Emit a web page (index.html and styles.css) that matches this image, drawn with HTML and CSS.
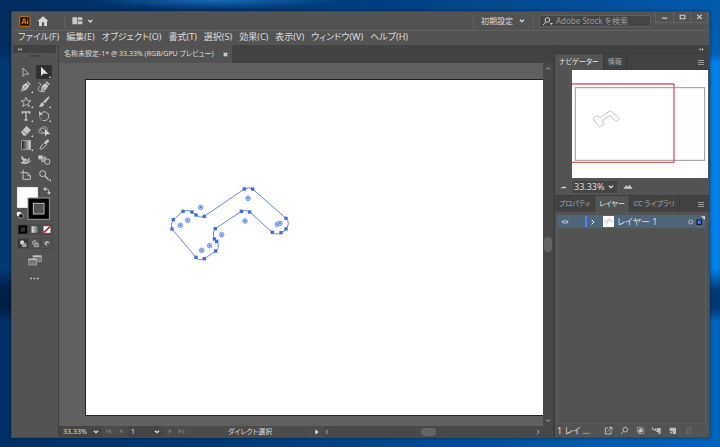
FILE: index.html
```html
<!DOCTYPE html>
<html lang="ja">
<head>
    <meta charset="UTF-8">
    <meta name="viewport" content="width=device-width, initial-scale=1.0">
    <title>名称未設定-1</title>
    <link rel="stylesheet" href="styles.css">
</head>
<body>
    <div class="window">
        <header class="titlebar">
            <svg class="logo" viewBox="0 0 36 33" role="img" aria-label="Ai">
                <rect x="2" y="2" width="31" height="29" rx="2" fill="#2b1200" stroke="#c9731c" stroke-width="3"/>
                <path d="M9 24L14 9h3l4 15M11 19h8M26 13v11M26 8v2" fill="none" stroke="#f08a24" stroke-width="3"/>
            </svg>
            <button class="icon-button home" aria-label="ホーム">
                <svg width="12" height="10" viewBox="0 0 36 30"><path d="M18 1L35 16h-5v14h-9V19h-6v11H6V16H1z" fill="#d4d4d4"/></svg>
            </button>
            <span class="divider"></span>
            <button class="icon-button arrange" aria-label="ドキュメントレイアウト">
                <svg width="22" height="8" viewBox="0 0 66 24"><path d="M1 1h15v21H1zM18 1h13v9H18zM18 13h13v9H18z" fill="#c8c8c8"/><path d="M49 9l6 6 6-6" fill="none" stroke="#ddd" stroke-width="4"/></svg>
            </button>
            <span class="spacer"></span>
            <span class="divider"></span>
            <button class="workspace">初期設定
                <svg width="6" height="4" viewBox="0 0 18 12"><path d="M3 2l6 6 6-6" fill="none" stroke="#ddd" stroke-width="4"/></svg>
            </button>
            <span class="divider"></span>
            <label class="search">
                <svg width="12" height="9" viewBox="0 0 36 27"><circle cx="16" cy="9" r="7" fill="none" stroke="#ccc" stroke-width="3"/><path d="M11 15L3 24" stroke="#ccc" stroke-width="3"/><path d="M23 18h10l-5 6z" fill="#ccc"/></svg>
                <input type="text" placeholder="Adobe Stock を検索" aria-label="Adobe Stock を検索">
            </label>
            <div class="window-buttons">
                <button aria-label="最小化"><svg viewBox="0 0 24 20"><path d="M3 14h18" stroke="#ccc" stroke-width="4"/></svg></button>
                <button aria-label="最大化"><svg viewBox="0 0 24 20"><path d="M4 4h16v12H4z" fill="none" stroke="#ccc" stroke-width="4"/></svg></button>
                <button aria-label="閉じる"><svg viewBox="0 0 24 20"><path d="M4 2l16 15M20 2L4 17" stroke="#ccc" stroke-width="4"/></svg></button>
            </div>
        </header>

        <nav class="menubar">
            <button>ファイル(F)</button>
            <button>編集(E)</button>
            <button>オブジェクト(O)</button>
            <button>書式(T)</button>
            <button>選択(S)</button>
            <button>効果(C)</button>
            <button>表示(V)</button>
            <button>ウィンドウ(W)</button>
            <button>ヘルプ(H)</button>
        </nav>

        <div class="workarea">
            <aside class="toolbox">
                <div class="dock-head">
                    <svg width="5" height="5" viewBox="0 0 15 15"><path d="M7 3L2 7l5 5zM14 3L9 7l5 5z" fill="#ccc"/></svg>
                </div>
                <div class="grip"></div>
                <div class="tools">
                    <button aria-label="選択"><svg viewBox="0 0 48 42"><path d="M15 9v25l7-7h11z" fill="none" stroke="#c6c6c6" stroke-width="2.5"/></svg></button>
                    <button class="active" aria-label="ダイレクト選択"><svg viewBox="0 0 48 42"><path d="M15 5v28l7-7h14z" fill="#e2e2e2"/><path d="M44 33v6h-6z" fill="#ddd"/></svg></button>
                    <button aria-label="ペン"><svg viewBox="0 0 48 42"><path d="M9 35l5-19 11-8 9 10-9 11z" fill="#c6c6c6"/><path d="M28 5l9 10" stroke="#c6c6c6" stroke-width="4"/><path d="M11 33l10-11" stroke="#535353" stroke-width="2"/><circle cx="22" cy="20" r="2" fill="#535353"/><path d="M45 33v6h-6z" fill="#ddd"/></svg></button>
                    <button aria-label="曲線"><svg viewBox="0 0 48 42"><path d="M14 35l4-18 11-8 8 9-8 11z" fill="#c6c6c6"/><path d="M31 5l9 9" stroke="#c6c6c6" stroke-width="4"/><path d="M17 32l9-10" stroke="#535353" stroke-width="2"/><path d="M8 9c9 0 6 7 2 11-5 5-5 12 4 15h13" fill="none" stroke="#c6c6c6" stroke-width="2.5"/></svg></button>
                    <button aria-label="スター"><svg viewBox="0 0 48 42"><path d="M24 7l4 10h11l-9 7 4 11-10-7-10 7 4-11-9-7h11z" fill="none" stroke="#c6c6c6" stroke-width="2.5"/><path d="M45 33v6h-6z" fill="#ddd"/></svg></button>
                    <button aria-label="ブラシ"><svg viewBox="0 0 48 42"><path d="M38 4c3 2 2 4 1 6L27 25l-6-5zM19 22l6 5c-2 7-9 10-17 8 6-3 4-11 11-13z" fill="#c6c6c6"/><path d="M45 33v6h-6z" fill="#ddd"/></svg></button>
                    <button aria-label="文字"><svg viewBox="0 0 48 42"><path d="M13 15V9h22v6M24 9v23M19 33h10" fill="none" stroke="#c6c6c6" stroke-width="4"/><path d="M45 33v6h-6z" fill="#ddd"/></svg></button>
                    <button aria-label="回転"><svg viewBox="0 0 48 42"><path d="M15 13c12-10 24-2 23 10-1 8-7 12-14 12" fill="none" stroke="#c6c6c6" stroke-width="3"/><path d="M24 35C15 35 10 28 11 20" fill="none" stroke="#c6c6c6" stroke-width="3" stroke-dasharray="3 3"/><path d="M9 6v12h12z" fill="#c6c6c6"/><path d="M45 33v6h-6z" fill="#ddd"/></svg></button>
                    <button aria-label="消しゴム"><svg viewBox="0 0 48 42"><path d="M9 24L25 6l14 12-16 17h-6z" fill="#c6c6c6"/><path d="M14 20l13 11" stroke="#535353" stroke-width="2"/><path d="M45 33v6h-6z" fill="#ddd"/></svg></button>
                    <button aria-label="シェイプ形成"><svg viewBox="0 0 48 42"><ellipse cx="19" cy="21" rx="11" ry="8" fill="none" stroke="#c6c6c6" stroke-width="2"/><ellipse cx="24" cy="17" rx="10" ry="9" fill="none" stroke="#c6c6c6" stroke-width="2"/><path d="M27 15v22l6-6h10z" fill="#d4d4d4"/></svg></button>
                    <button aria-label="グラデーション"><svg viewBox="0 0 48 42"><defs><linearGradient id="gradTool"><stop offset="0" stop-color="#222"/><stop offset="1" stop-color="#ddd"/></linearGradient></defs><rect x="11" y="8" width="27" height="26" fill="url(#gradTool)" stroke="#b8b8b8" stroke-width="2"/><path d="M45 33v6h-6z" fill="#ddd"/></svg></button>
                    <button aria-label="スポイト"><svg viewBox="0 0 48 42"><path d="M12 32l3-7 11-11 6 6-11 11-7 3z" fill="none" stroke="#c6c6c6" stroke-width="3"/><path d="M24 11l4-1 5-5c6-2 8 3 5 7l-5 4v5z" fill="#c6c6c6"/></svg></button>
                    <button aria-label="リンクルツール"><svg viewBox="0 0 48 42"><path d="M9 10c6-2 9 4 8 8 6-3 9 0 10 3l10-9-5 12 8-3-8 9c-8 4-16 3-22 1l-2-5c5 2 9 0 7-3s-6-4-4-7z" fill="#c6c6c6"/><path d="M19 28l14-5M22 21l3 4" stroke="#535353" stroke-width="2"/></svg></button>
                    <button aria-label="ブレンド"><svg viewBox="0 0 48 42"><path d="M7 7h13v12H7z" fill="#c6c6c6"/><path d="M17 12h12v14H17z" fill="#999" stroke="#c6c6c6" stroke-width="2"/><circle cx="34" cy="26" r="8" fill="#535353" stroke="#c6c6c6" stroke-width="3"/></svg></button>
                    <button aria-label="アートボード"><svg viewBox="0 0 48 42"><path d="M16 5v9M7 13h9" stroke="#c6c6c6" stroke-width="2.5"/><path d="M15 14h13l9 8v12H15z" fill="none" stroke="#c6c6c6" stroke-width="3"/><path d="M28 14v9h9" fill="none" stroke="#c6c6c6" stroke-width="2"/></svg></button>
                    <button aria-label="ズーム"><svg viewBox="0 0 48 42"><circle cx="20" cy="17" r="9" fill="none" stroke="#c6c6c6" stroke-width="3"/><path d="M27 24l11 11" stroke="#c6c6c6" stroke-width="4"/><path d="M45 33v6h-6z" fill="#ddd"/></svg></button>
                </div>
                <svg class="swatches" viewBox="0 0 108 105" role="img" aria-label="塗りと線">
                    <rect x="3" y="3" width="63" height="63" fill="#fff" stroke="#777"/>
                    <rect x="36" y="36" width="64" height="64" fill="#000" stroke="#999" stroke-width="3"/>
                    <rect x="52" y="52" width="32" height="32" fill="#535353" stroke="#bbb" stroke-width="3"/>
                    <path d="M87 9c9-2 13 5 12 11" fill="none" stroke="#ccc" stroke-width="3"/>
                    <path d="M81 9l8-7v14zM93 19h12l-6 7z" fill="#ccc"/>
                    <circle cx="9" cy="84" r="7" fill="#fff"/><path d="M9 84h12v12H9z" fill="#111" stroke="#bbb" stroke-width="2"/>
                </svg>
                <div class="mode-row">
                    <button class="active" aria-label="カラー"><svg viewBox="0 0 36 33"><path d="M6 5h23v23H6z" fill="#333" stroke="#000" stroke-width="6"/></svg></button>
                    <button aria-label="グラデーション塗り"><svg viewBox="0 0 36 33"><defs><linearGradient id="gradFill"><stop offset="0" stop-color="#eee"/><stop offset="1" stop-color="#555"/></linearGradient></defs><path d="M4 3h28v27H4z" fill="url(#gradFill)" stroke="#222" stroke-width="2"/></svg></button>
                    <button aria-label="なし"><svg viewBox="0 0 36 33"><path d="M4 3h28v27H4z" fill="#fff" stroke="#222" stroke-width="2"/><path d="M6 28L30 5" stroke="#d2151e" stroke-width="6"/></svg></button>
                </div>
                <div class="mode-row">
                    <button class="active" aria-label="標準描画"><svg viewBox="0 0 36 33"><circle cx="15" cy="13" r="8" fill="#ccc"/><path d="M18 17h12v11H15z" fill="#999" stroke="#ccc" stroke-width="2"/></svg></button>
                    <button aria-label="背面描画"><svg viewBox="0 0 36 33"><path d="M20 16h10v12H16v-8" fill="#777" stroke="#bbb" stroke-width="3"/><circle cx="16" cy="13" r="7" fill="#777" stroke="#bbb" stroke-width="3"/></svg></button>
                    <button aria-label="内側描画"><svg viewBox="0 0 36 33"><circle cx="18" cy="16" r="9" fill="#aaa"/><path d="M18 16h7v7h-7z" fill="#444"/></svg></button>
                </div>
                <button class="icon-button screen-mode" aria-label="スクリーンモード">
                    <svg width="14" height="11" viewBox="0 0 42 33"><rect x="15" y="2" width="25" height="18" fill="#777" stroke="#aaa" stroke-width="2"/><rect x="2" y="12" width="24" height="18" fill="#777" stroke="#aaa" stroke-width="2"/><path d="M2 13h24M15 4h25" stroke="#ccc" stroke-width="3"/></svg>
                </button>
                <button class="icon-button more" aria-label="ツールバーを編集">
                    <svg width="9" height="3" viewBox="0 0 27 9"><path d="M1 2h5v5H1zM11 2h5v5h-5zM21 2h5v5h-5z" fill="#ccc"/></svg>
                </button>
            </aside>

            <main class="document">
                <div class="doc-tabs">
                    <div class="doc-tab">
                        <span>名称未設定-1* @ 33.33% (RGB/GPU プレビュー)</span>
                        <button class="icon-button" aria-label="閉じる"><svg width="5" height="5" viewBox="0 0 15 15"><path d="M2 2l11 11M13 2L2 13" stroke="#ddd" stroke-width="4"/></svg></button>
                    </div>
                </div>
                <div class="view">
                    <div class="canvas">
                        <div class="artboard">
                            <svg class="artwork" viewBox="0 0 480 330">
                                <path id="shape" d="M283 57Q296 50 308 57L408 145Q422 158 408 177Q403 185 393 188Q380 197 367 187L299 126Q287 117 274 124L196 176Q186 187 193 207L200 214Q212 229 197 243L163 266Q149 275 138 262L66 177Q60 162 70 149L99 124Q114 117 126 126L138 135Q150 146 163 139Z" fill="none" stroke="#6687d3" stroke-width="3"/>
                                <g id="anchors" fill="#3d6ddb"></g>
                                <g id="widgets"></g>
                            </svg>
                        </div>
                    </div>
                    <div class="scroll-y">
                        <svg viewBox="0 0 15 9"><path d="M2 7l5-5 5 5" fill="none" stroke="#aaa" stroke-width="3"/></svg>
                        <span class="thumb"></span>
                        <svg viewBox="0 0 15 9"><path d="M2 2l5 5 5-5" fill="none" stroke="#aaa" stroke-width="3"/></svg>
                    </div>
                </div>
                <div class="statusbar">
                    <select class="zoom-select" aria-label="ズーム"><option>33.33%</option></select>
                    <span class="steps"><svg width="18" height="7" viewBox="0 0 54 21"><path d="M3 3v14" stroke="#777" stroke-width="3"/><path d="M15 3v14L6 10zM49 3v14l-9-7z" fill="#777"/></svg></span>
                    <select class="board-select" aria-label="アートボード"><option>1</option></select>
                    <span class="steps"><svg width="18" height="7" viewBox="0 0 54 21"><path d="M5 3v14l9-7zM35 3v14l9-7z" fill="#777"/><path d="M48 3v14" stroke="#777" stroke-width="3"/></svg></span>
                    <span class="tool-name">ダイレクト選択</span>
                    <button class="icon-button status-menu" aria-label="表示項目"><svg width="4" height="6" viewBox="0 0 12 18"><path d="M1 1v16l10-8z" fill="#ddd"/></svg></button>
                    <div class="scroll-x">
                        <svg width="4" height="6" viewBox="0 0 12 18"><path d="M9 2L3 9l6 7" fill="none" stroke="#aaa" stroke-width="3"/></svg>
                        <span class="thumb"></span>
                        <svg width="4" height="6" viewBox="0 0 12 18"><path d="M3 2l6 7-6 7" fill="none" stroke="#aaa" stroke-width="3"/></svg>
                    </div>
                </div>
            </main>

            <aside class="panels">
                <div class="dock-head right">
                    <svg width="5" height="5" viewBox="0 0 15 15"><path d="M2 3l5 4-5 5zM9 3l5 4-5 5z" fill="#ccc"/></svg>
                </div>
                <div class="panel-tabs">
                    <button class="active">ナビゲーター</button>
                    <button>情報</button>
                    <span class="spacer"></span>
                    <svg class="panel-menu" viewBox="0 0 6 5"><path d="M0 0h6v1H0zM0 2h6v1H0zM0 4h6v1H0z" fill="#999"/></svg>
                </div>
                <div class="navigator">
                    <svg viewBox="0 0 408 324">
                        <rect width="408" height="324" fill="#fff"/>
                        <rect x="10" y="53" width="388" height="218" fill="none" stroke="#999" stroke-width="3"/>
                        <g transform="translate(50 111) scale(.22)"><path d="M283 57Q296 50 308 57L408 145Q422 158 408 177Q403 185 393 188Q380 197 367 187L299 126Q287 117 274 124L196 176Q186 187 193 207L200 214Q212 229 197 243L163 266Q149 275 138 262L66 177Q60 162 70 149L99 124Q114 117 126 126L138 135Q150 146 163 139Z" fill="none" stroke="#bbb" stroke-width="12"/></g>
                        <path d="M-5 42h311v235H-5" fill="none" stroke="#d65e60" stroke-width="4"/>
                    </svg>
                </div>
                <div class="nav-zoom">
                    <svg width="7" height="4" viewBox="0 0 21 12"><path d="M1 10l6-5 3 2 3-4 7 7z" fill="#ccc"/></svg>
                    <select class="nav-select" aria-label="ナビゲーターズーム"><option>33.33%</option></select>
                    <svg width="10" height="5" viewBox="0 0 30 15"><path d="M1 14L10 3l4 6 6-7 9 12z" fill="#ccc"/></svg>
                </div>
                <div class="panel-tabs">
                    <button>プロパティ</button>
                    <button class="active">レイヤー</button>
                    <button>CC ライブラリ</button>
                    <span class="spacer"></span>
                    <svg class="panel-menu" viewBox="0 0 6 5"><path d="M0 0h6v1H0zM0 2h6v1H0zM0 4h6v1H0z" fill="#999"/></svg>
                </div>
                <div class="layers">
                    <div class="layer">
                        <svg class="eye" viewBox="0 0 24 18"><path d="M1 9Q12-4 23 9Q12 22 1 9z" fill="#c5cdd4"/><circle cx="12" cy="9" r="5" fill="#4f6375"/><circle cx="12" cy="9" r="2" fill="#ddd"/></svg>
                        <span class="layer-color"></span>
                        <svg class="expand" viewBox="0 0 12 18"><path d="M2 2l7 7-7 7" fill="none" stroke="#eee" stroke-width="3"/></svg>
                        <svg class="thumbnail" viewBox="0 0 33 33"><rect width="33" height="33" fill="#fff"/><g transform="translate(1 5) scale(.066)"><path d="M283 57Q296 50 308 57L408 145Q422 158 408 177Q403 185 393 188Q380 197 367 187L299 126Q287 117 274 124L196 176Q186 187 193 207L200 214Q212 229 197 243L163 266Q149 275 138 262L66 177Q60 162 70 149L99 124Q114 117 126 126L138 135Q150 146 163 139Z" fill="none" stroke="#aaa" stroke-width="30"/></g></svg>
                        <span class="layer-name">レイヤー 1</span>
                        <svg class="target" viewBox="0 0 54 36"><circle cx="11" cy="18" r="6" fill="none" stroke="#b8c0c8" stroke-width="3"/><rect x="30" y="12" width="13" height="13" fill="#4777ff" stroke="#111" stroke-width="3"/><path d="M42 1h12v10z" fill="#ddd"/></svg>
                    </div>
                </div>
                <footer class="layer-footer">
                    <span>1 レイ ...</span>
                    <span class="spacer"></span>
                    <button class="icon-button" aria-label="書き出し"><svg viewBox="0 0 27 27"><path d="M12 6H4v18h17v-9M11 17L23 4M15 4h9v9" fill="none" stroke="#bbb" stroke-width="3"/></svg></button>
                    <button class="icon-button" aria-label="検索"><svg viewBox="0 0 27 27"><circle cx="16" cy="11" r="7" fill="none" stroke="#bbb" stroke-width="3"/><path d="M11 16L3 24" stroke="#bbb" stroke-width="3"/></svg></button>
                    <button class="icon-button" aria-label="マスク"><svg viewBox="0 0 27 27"><path d="M4 4h14v14H4zM9 9h14v14H9z" fill="none" stroke="#bbb" stroke-width="2"/><circle cx="14" cy="14" r="5" fill="#ccc"/></svg></button>
                    <button class="icon-button" aria-label="サブレイヤー"><svg viewBox="0 0 27 27"><path d="M2 4v7h8" fill="none" stroke="#bbb" stroke-width="3"/><path d="M9 6l7 5-7 5z" fill="#bbb"/><path d="M15 6h11v18h-7v-6h-7v-3h3z" fill="#bbb"/></svg></button>
                    <button class="icon-button" aria-label="新規レイヤー"><svg viewBox="0 0 27 27"><path d="M5 5h19v19H14v-8H5z" fill="#bbb"/><path d="M5 18l7 6v-6z" fill="#bbb"/></svg></button>
                    <button class="icon-button" aria-label="削除"><svg viewBox="0 0 27 27"><path d="M5 7h18M10 6V3h7v3M7 9l1 15h12l1-15M11 11v10M17 11v10" fill="none" stroke="#707070" stroke-width="2"/></svg></button>
                </footer>
            </aside>
        </div>
    </div>

    <script>
        const ns = 'http://www.w3.org/2000/svg';

        const anchors = [
            [283, 57], [308, 57], [408, 145], [408, 177], [393, 188], [367, 187], [299, 126],
            [274, 124], [196, 176], [193, 207], [200, 214], [197, 243], [163, 266], [138, 262],
            [66, 177], [70, 149], [99, 124], [126, 126], [138, 135], [163, 139]
        ];
        // Live corner widgets
        const widgets = [
            [152, 112], [113, 151], [91, 166], [294, 85], [285, 153],
            [382, 163], [390, 160], [215, 194], [179, 227], [155, 241]
        ];

        function add(parent, name, attrs) {
            const el = document.createElementNS(ns, name);
            for (const key in attrs) el.setAttribute(key, attrs[key]);
            parent.appendChild(el);
        }

        const anchorLayer = document.getElementById('anchors');
        anchors.forEach(([x, y]) => add(anchorLayer, 'rect', { x: x - 5, y: y - 5, width: 10, height: 10 }));

        const widgetLayer = document.getElementById('widgets');
        widgets.forEach(([x, y]) => {
            add(widgetLayer, 'circle', { cx: x, cy: y, r: 7, fill: '#c3d1f7', stroke: '#7d9ae3', 'stroke-width': 3 });
            add(widgetLayer, 'circle', { cx: x, cy: y, r: 3, fill: '#4572d8' });
        });
    </script>
</body>
</html>
```

FILE: styles.css
```css
* {
    box-sizing: border-box;
}

body {
    margin: 0;
    height: 100vh;
    padding: 11px 10px 9px 11px;
    background: radial-gradient(ellipse 130px 9px at 30% 0, rgba(40, 140, 230, 0.6), transparent),
        linear-gradient(180deg, rgba(0, 20, 60, 0.35) 0, rgba(0, 20, 60, 0.3) 12%, transparent 14%, transparent 60%, rgba(0, 10, 40, 0.6) 65%, rgba(0, 10, 40, 0.6) 69%, rgba(0, 20, 60, 0.25) 72%),
        linear-gradient(90deg, #003a75 0%, #004a90 35%, #0060b4 65%, #0080e8 100%);
    font-family: "Noto Sans", "Noto Sans CJK JP", sans-serif;
    font-size: 9px;
    line-height: 12px;
    font-feature-settings: "palt";
    color: #ddd;
}

button,
input,
select {
    margin: 0;
    padding: 0;
    border: none;
    border-radius: 0;
    background: none;
    color: inherit;
    font: inherit;
    font-feature-settings: inherit;
    appearance: none;
}

svg {
    display: block;
    flex: none;
}

.window {
    display: flex;
    flex-direction: column;
    height: 100%;
    background: #535353;
    border: 1px solid #484848;
    border-radius: 2px 2px 0 0;
    box-shadow: 0 0 3px rgba(0, 0, 0, 0.5);
}

.spacer {
    flex: 1;
}

.icon-button {
    display: flex;
    align-items: center;
    justify-content: center;
}

/* Title bar */
.titlebar {
    display: flex;
    align-items: center;
    height: 19px;
    padding-left: 7px;
    border-bottom: 1px solid #626262;
}

.logo {
    width: 12px;
    height: 11px;
}

.home {
    margin-left: 6px;
    margin-right: 15px;
}

.arrange {
    margin-left: 7px;
}

.divider {
    width: 1px;
    height: 13px;
    background: #606060;
}

.workspace {
    display: flex;
    align-items: center;
    gap: 6px;
    margin: 0 8px 0 7px;
    font-size: 8px;
}

.search {
    display: flex;
    align-items: center;
    gap: 2px;
    width: 112px;
    height: 12px;
    margin: 0 4px 0 5px;
    padding-left: 2px;
    background: #454545;
    border: 1px solid #606060;
    border-radius: 2px;
}

.search input {
    flex: 1;
    min-width: 0;
    height: 10px;
    font-size: 8px;
    line-height: 10px;
}

.search input::placeholder {
    color: #999;
    opacity: 1;
}

.window-buttons {
    display: flex;
    align-self: flex-start;
    margin-right: 1px;
    border: 1px solid #646464;
    border-top: none;
}

.window-buttons button {
    display: flex;
    align-items: center;
    justify-content: center;
    width: 17px;
    height: 10px;
}

.window-buttons button + button {
    border-left: 1px solid #646464;
}

.window-buttons svg {
    width: 7px;
    height: 6px;
}

/* Menu */
.menubar {
    display: flex;
    gap: 7px;
    height: 14px;
    padding-left: 6px;
}

.menubar button {
    height: 12px;
    white-space: nowrap;
}

.workarea {
    display: flex;
    flex: 1;
    min-height: 0;
}

.dock-head {
    display: flex;
    align-items: center;
    height: 8px;
    padding-left: 4px;
    background: #414141;
}

.dock-head.right {
    justify-content: flex-end;
    padding-right: 5px;
}

/* Tools */
.toolbox {
    width: 47px;
    padding: 0 2px 0 1px;
    border-right: 1px solid #3e3e3e;
    background: #535353;
}

.grip {
    width: 12px;
    height: 2px;
    margin: 2px auto 8px;
    background: #454545;
}

.tools {
    display: grid;
    grid-template-columns: 18px 18px;
    grid-template-rows: repeat(8, 1fr);
    height: 117px;
    margin-left: 4px;
}

.tools button {
    display: flex;
    align-items: center;
    justify-content: center;
}

.tools svg {
    width: 16px;
    height: 14px;
}

.tools .active svg {
    background: #303030;
    border-radius: 2px;
}

.swatches {
    width: 36px;
    height: 35px;
    margin: 4px 0 3px 3px;
}

.mode-row {
    display: flex;
    margin: 0 0 3px 4px;
}

.mode-row button {
    width: 12px;
    height: 11px;
    border: 1px solid #4a4a4a;
}

.mode-row .active {
    background: #383838;
}

.mode-row svg {
    width: 10px;
    height: 9px;
}

.screen-mode {
    margin: 6px auto 11px;
}

.more {
    margin: 0 auto;
}

/* Document */
.document {
    display: flex;
    flex-direction: column;
    flex: 1;
    min-width: 0;
    background: #606060;
}

.doc-tabs {
    display: flex;
    height: 18px;
    background: #424242;
}

.doc-tab {
    display: flex;
    align-items: center;
    gap: 10px;
    padding: 0 4px 0 5px;
    background: #535353;
    font-size: 7px;
    white-space: nowrap;
}

.view {
    display: flex;
    flex: 1;
    min-height: 0;
}

.canvas {
    display: flex;
    flex: 1;
    min-width: 0;
    padding: 16px 0 10px 26px;
}

.artboard {
    position: relative;
    flex: 1;
    background: #fff;
    border: 1px solid #222;
    border-right: none;
}

.artwork {
    position: absolute;
    left: 64px;
    top: 90px;
    width: 160px;
    height: 110px;
}

.scroll-y {
    display: flex;
    flex-direction: column;
    align-items: center;
    justify-content: space-between;
    width: 10px;
    padding: 4px 0;
    background: #484848;
}

.scroll-y svg {
    width: 5px;
    height: 3px;
}

.scroll-y .thumb {
    width: 8px;
    height: 15px;
    border-radius: 4px;
    background: #646464;
}

.statusbar {
    display: flex;
    align-items: center;
    height: 11px;
    background: #4b4b4b;
    font-size: 7px;
    line-height: 10px;
}

select {
    background: #454545 url("data:image/svg+xml,%3Csvg xmlns='http://www.w3.org/2000/svg' width='6' height='4' viewBox='0 0 18 12'%3E%3Cpath d='M3 2l6 6 6-6' fill='none' stroke='%23ddd' stroke-width='4'/%3E%3C/svg%3E") no-repeat right 3px center;
}

.zoom-select {
    width: 43px;
    height: 11px;
    padding-left: 4px;
}

.board-select {
    width: 35px;
    height: 11px;
    padding-left: 3px;
}

.steps {
    padding: 0 4px;
}

.tool-name {
    width: 122px;
    border: 1px solid #535353;
    border-width: 0 1px;
    text-align: center;
}

.status-menu {
    width: 12px;
    height: 11px;
}

.scroll-x {
    display: flex;
    flex: 1;
    align-items: center;
    height: 11px;
    padding: 0 13px 0 2px;
    background: #484848;
}

.scroll-x .thumb {
    width: 15px;
    height: 8px;
    margin: 0 auto 0 92px;
    border-radius: 4px;
    background: #646464;
}

/* Panels */
.panels {
    display: flex;
    flex-direction: column;
    width: 156px;
    border-left: 2px solid #3e3e3e;
    background: #535353;
}

.panel-tabs {
    display: flex;
    align-items: center;
    height: 17px;
    background: #424242;
    border-top: 1px solid #3b3b3b;
}

.panel-tabs button {
    height: 16px;
    padding: 0 4px;
    border-right: 1px solid #393939;
    color: #aaa;
    font-size: 7px;
    white-space: nowrap;
}

.panel-tabs .active {
    background: #535353;
    color: #e6e6e6;
}

.panel-menu {
    width: 6px;
    height: 5px;
    margin-right: 5px;
}

.navigator {
    padding: 0 1px 0 17px;
}

.navigator svg {
    width: 100%;
    height: 108px;
}

.nav-zoom {
    display: flex;
    align-items: center;
    gap: 6px;
    height: 17px;
    padding-left: 5px;
}

.nav-select {
    width: 44px;
    height: 12px;
    padding-left: 1px;
}

.layers {
    flex: 1;
    margin: 3px 3px 0 2px;
    border: 1px solid #5c5c5c;
    border-top: none;
}

.layer {
    display: flex;
    align-items: center;
    height: 13px;
    background: #4f6579;
}

.eye {
    width: 8px;
    height: 6px;
    margin: 0 16px 0 3px;
}

.layer-color {
    width: 2px;
    height: 11px;
    background: #4f7bff;
}

.expand {
    width: 4px;
    height: 6px;
    margin: 0 8px 0 4px;
}

.thumbnail {
    width: 11px;
    height: 11px;
    margin-right: 3px;
}

.layer-name {
    flex: 1;
}

.target {
    width: 18px;
    height: 12px;
}

.layer-footer {
    display: flex;
    align-items: center;
    gap: 7px;
    height: 13px;
    padding: 0 17px 0 2px;
    white-space: nowrap;
}

.layer-footer svg {
    width: 9px;
    height: 9px;
}
```
